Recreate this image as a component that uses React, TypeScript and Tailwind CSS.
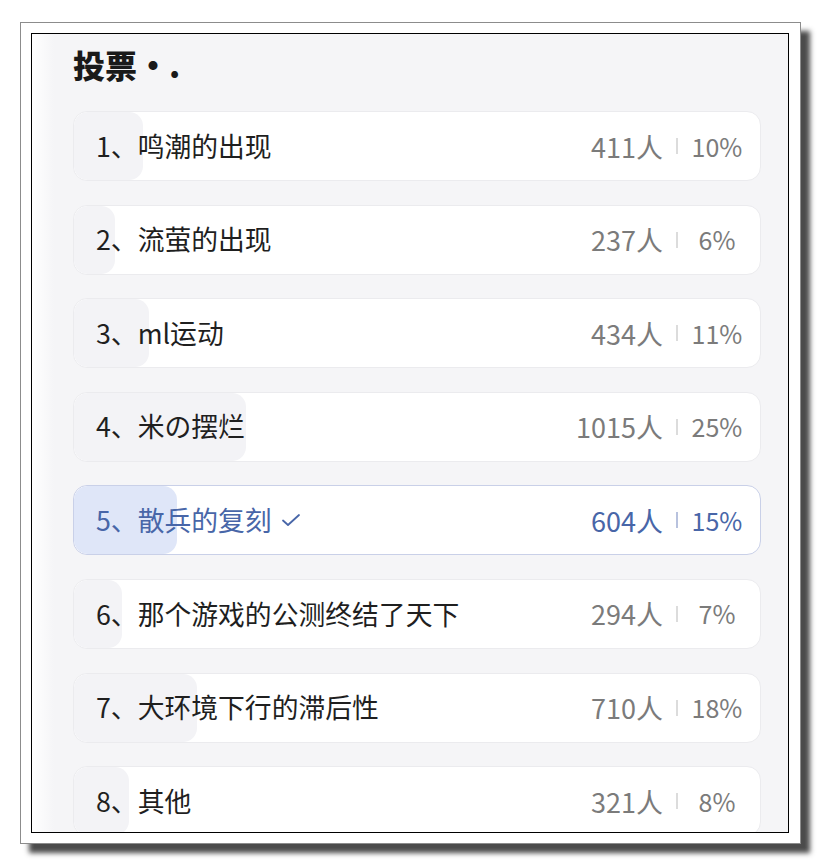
import { FC } from "react";

type Option = {
  label: string;
  count: number;
  pct: number;
  picked?: boolean;
};

const options: Option[] = [
  { label: "1、鸣潮的出现", count: 411, pct: 10 },
  { label: "2、流萤的出现", count: 237, pct: 6 },
  { label: "3、ml运动", count: 434, pct: 11 },
  { label: "4、米の摆烂", count: 1015, pct: 25 },
  { label: "5、散兵的复刻", count: 604, pct: 15, picked: true },
  { label: "6、那个游戏的公测终结了天下", count: 294, pct: 7 },
  { label: "7、大环境下行的滞后性", count: 710, pct: 18 },
  { label: "8、其他", count: 321, pct: 8 },
];

const CheckMark: FC = () => (
  <svg
    width="22"
    height="16"
    viewBox="0 0 22 16"
    fill="none"
    stroke="currentColor"
    strokeWidth={1.8}
    strokeLinecap="round"
    strokeLinejoin="round"
    aria-hidden="true"
  >
    <path d="M3 8.5l5 4.5L19 3" />
  </svg>
);

const VoteRow: FC<{ option: Option }> = ({ option }) => {
  const { label, count, pct, picked } = option;
  return (
    <div
      className={`relative h-[70px] shrink-0 rounded-[14px] border overflow-hidden ${
        picked ? "bg-white border-[#c9d0e8]" : "bg-white border-[#ebebee]"
      }`}
    >
      {/* share bar */}
      <div
        className={`absolute inset-y-0 left-0 rounded-[14px] ${
          picked ? "bg-[#dfe6f8]" : "bg-[#f3f3f6]"
        }`}
        style={{ width: `${pct}%` }}
      />
      <div
        className={`relative flex h-full items-center pl-[22px] pr-[17px] ${
          picked ? "text-[#4866a8]" : "text-[#1f1f1f]"
        }`}
      >
        <span className="flex items-center gap-[8px] text-[26.8px] leading-none">
          {label}
          {picked && <CheckMark />}
        </span>
        <span
          className={`ml-auto text-[27px] leading-none ${
            picked ? "text-[#4866a8]" : "text-[#7b7b7b]"
          }`}
        >
          {count}人
        </span>
        <span
          className={`mx-[13px] h-[16px] w-[2px] ${
            picked ? "bg-[#b8c2de]" : "bg-[#dcdcdc]"
          }`}
        />
        <span
          className={`w-[52px] text-center text-[25px] leading-none ${
            picked ? "text-[#4866a8]" : "text-[#7b7b7b]"
          }`}
        >
          {pct}%
        </span>
      </div>
    </div>
  );
};

const App: FC = () => {
  return (
    <div
      className="w-[820px] h-[866px] bg-white pl-[20px] pt-[22px]"
      style={{ fontFamily: '"Noto Sans CJK SC", "Noto Sans", sans-serif' }}
    >
      <div className="w-[781px] h-[822px] border border-[#8c8c8c] bg-white p-[10px] shadow-[9px_9px_5px_rgba(30,30,30,0.8)]">
        <div className="h-full w-[758px] border border-black overflow-hidden bg-[linear-gradient(to_right,#ffffff_0px,#f5f5f7_22px)] pl-[41px] pr-[27px] pt-[10px]">
          <h2 className="h-[40px] flex items-center text-[32px] font-black text-[#1a1a1a] leading-none">
            投票
            <span>·</span>
            <span>.</span>
          </h2>
          <div className="mt-[27px] flex flex-col gap-[23.6px]">
            {options.map((o) => (
              <VoteRow key={o.label} option={o} />
            ))}
          </div>
        </div>
      </div>
    </div>
  );
};

export default App;
